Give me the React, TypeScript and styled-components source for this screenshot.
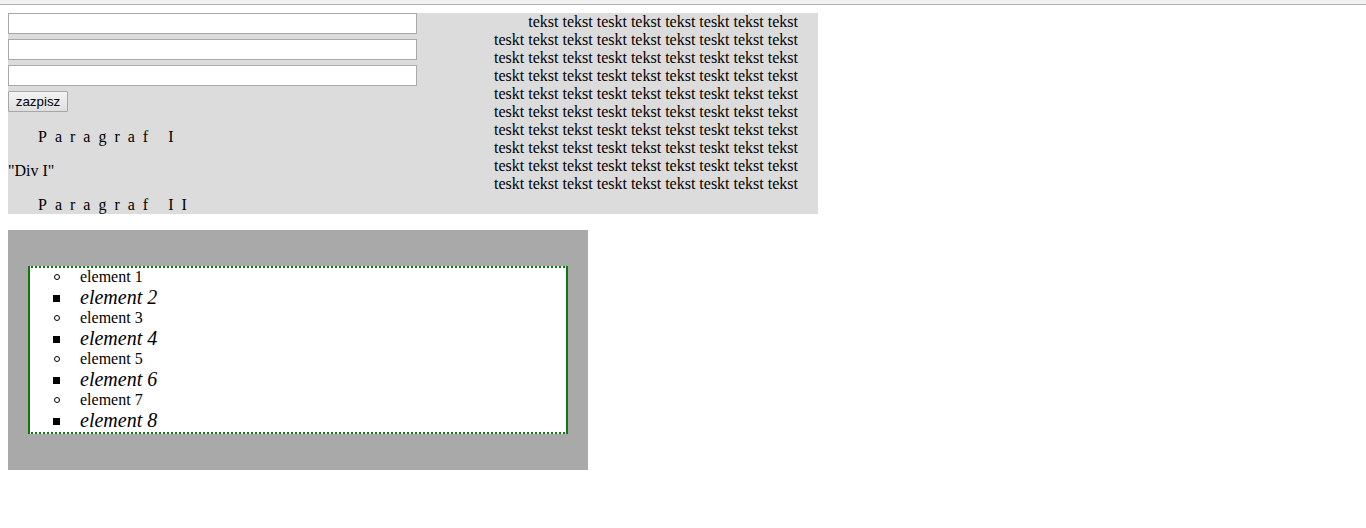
import React from "react";
import styled, { createGlobalStyle } from "styled-components";

const Global = createGlobalStyle`
  html, body { margin: 0; padding: 0; background: #ffffff; }
  body { font-family: "Liberation Serif", "Times New Roman", serif; font-size: 16px; color: #000; }
`;

const ChromeEdge = styled.div`
  height: 4px;
  background: #f1f1f1;
  border-bottom: 1px solid #b0b0b0;
`;

const Page = styled.div`
  padding: 8px;
  display: flex;
  flex-direction: column;
  align-items: flex-start;
  gap: 16px;
`;

const TopPanel = styled.section`
  width: 810px;
  background: #dcdcdc;
  display: flex;
  align-items: flex-start;
`;

const LeftColumn = styled.div`
  width: 409px;
  display: flex;
  flex-direction: column;
  align-items: flex-start;
`;

const Form = styled.form`
  display: flex;
  flex-direction: column;
  align-items: flex-start;
  gap: 5px;
  margin: 0;
`;

const TextInput = styled.input`
  box-sizing: border-box;
  width: 409px;
  height: 21px;
  margin: 0;
  padding: 1px 2px;
  border: 1px solid #a9a9a9;
  background: #fff;
  font-family: "Liberation Sans", Arial, sans-serif;
  font-size: 13px;
  outline: none;
`;

const SaveButton = styled.button`
  box-sizing: border-box;
  height: 21px;
  width: 60px;
  margin: 0;
  padding: 0 6px;
  border: 1px solid #a7a7a7;
  border-radius: 1px;
  background: linear-gradient(#f4f4f4, #dedede);
  font-family: "Liberation Sans", Arial, sans-serif;
  font-size: 13.33px;
  color: #000;
  line-height: 19px;
`;

const SpacedParagraph = styled.p`
  margin: 16px 0 0;
  text-indent: 30px;
  letter-spacing: 8px;
  line-height: 18px;
`;

const PlainText = styled.div`
  margin-top: 16px;
  line-height: 18px;
`;

const RightColumn = styled.div`
  margin-left: auto;
  width: 320px;
  padding-right: 20px;
  text-align: right;
  text-indent: 30px;
  line-height: 18px;
`;

const ListPanel = styled.section`
  box-sizing: border-box;
  width: 580px;
  padding: 20px;
  background: #a9a9a9;
`;

const ItemList = styled.ul`
  margin: 16px 0;
  padding: 0;
  list-style: none;
  background: #ffffff;
  border-top: 2px dotted #0a7a0a;
  border-bottom: 2px dotted #0a7a0a;
  border-left: 2px solid #0a7a0a;
  border-right: 2px solid #0a7a0a;
`;

const Item = styled.li<{ $even: boolean }>`
  position: relative;
  padding-left: 50px;
  font-size: ${(p) => (p.$even ? "20px" : "16px")};
  font-style: ${(p) => (p.$even ? "italic" : "normal")};
  line-height: ${(p) => (p.$even ? "23px" : "18px")};

  &::before {
    content: "";
    position: absolute;
    box-sizing: border-box;
    top: 50%;
    ${(p) =>
      p.$even
        ? `left: 23px; width: 7px; height: 7px; margin-top: -3px; background: #000;`
        : `left: 24px; width: 6px; height: 6px; margin-top: -3px; border: 1px solid #000; border-radius: 50%;`}
  }
`;

const words = Array.from({ length: 89 }, (_, i) => (i % 3 === 2 ? "teskt" : "tekst")).join(" ");

export default function App() {
  return (
    <>
      <Global />
      <ChromeEdge />
      <Page>
        <TopPanel>
          <LeftColumn>
            <Form onSubmit={(e) => e.preventDefault()}>
              <TextInput type="text" />
              <TextInput type="text" />
              <TextInput type="text" />
              <SaveButton type="submit">zazpisz</SaveButton>
            </Form>
            <SpacedParagraph>Paragraf I</SpacedParagraph>
            <PlainText>"Div I"</PlainText>
            <SpacedParagraph>Paragraf II</SpacedParagraph>
          </LeftColumn>
          <RightColumn>{words}</RightColumn>
        </TopPanel>
        <ListPanel>
          <ItemList>
            {Array.from({ length: 8 }, (_, i) => (
              <Item key={i} $even={i % 2 === 1}>
                element {i + 1}
              </Item>
            ))}
          </ItemList>
        </ListPanel>
      </Page>
    </>
  );
}
